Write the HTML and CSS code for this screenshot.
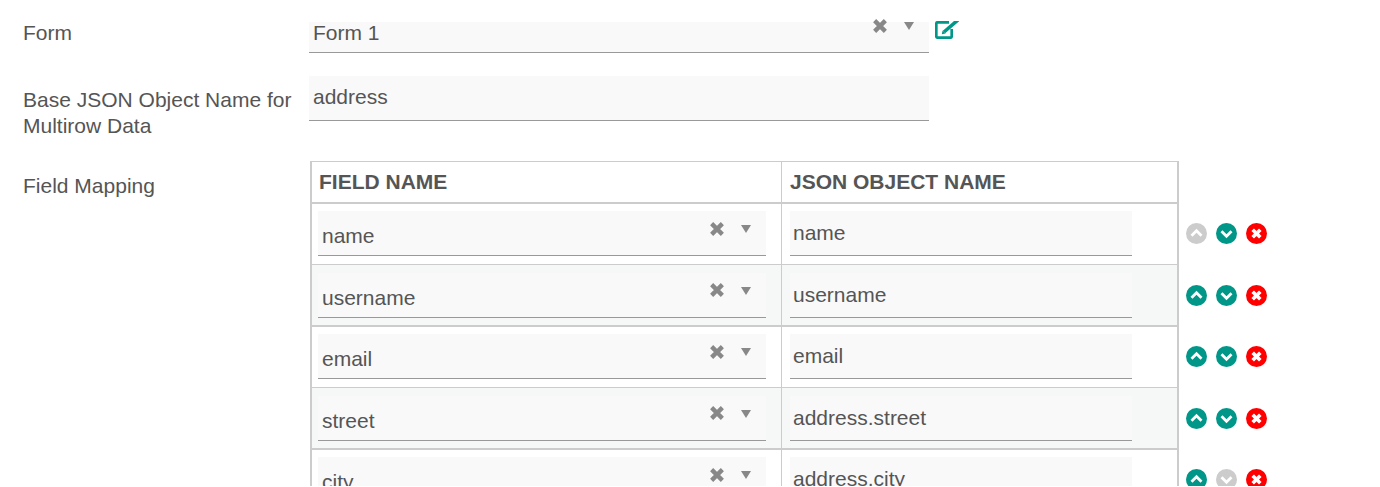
FILE: index.html
```html
<!DOCTYPE html>
<html lang="en">
<head>
<meta charset="utf-8">
<title>Field Mapping</title>
<link rel="stylesheet" href="styles.css">
</head>
<body>
<svg class="defs" width="0" height="0" aria-hidden="true">
  <symbol id="clear" viewBox="0 0 14 14"><path d="M2.300 2.300l9.400 9.400M11.700 2.300l-9.400 9.400" fill="none" stroke="currentColor" stroke-width="3.800"/></symbol>
  <symbol id="up" viewBox="0 0 21 21"><circle cx="10.500" cy="10.500" r="10.500" fill="currentColor"/><path d="M5.500 12.700l5-5 5 5" fill="none" stroke="#fff" stroke-width="2.800"/></symbol>
  <symbol id="down" viewBox="0 0 21 21"><circle cx="10.500" cy="10.500" r="10.500" fill="currentColor"/><path d="M5.500 8.300l5 5 5-5" fill="none" stroke="#fff" stroke-width="2.800"/></symbol>
  <symbol id="remove" viewBox="0 0 21 21"><circle cx="10.500" cy="10.500" r="10.500" fill="currentColor"/><path d="M6.700 6.700l7.600 7.600M14.300 6.700l-7.600 7.600" fill="none" stroke="#fff" stroke-width="3.600"/></symbol>
</svg>
<main class="form">
  <div class="form-row form-row-first">
    <div class="label">Form</div>
    <div class="field select select-form"><span class="value">Form 1</span><svg class="clear"><use href="#clear"/></svg><span class="caret"></span></div>
    <svg class="edit" viewBox="0 0 25 18" width="25" height="18"><path d="M14 1.300H2.600a1.300 1.300 0 0 0-1.300 1.300v12.800a1.300 1.300 0 0 0 1.300 1.300h12.800a1.300 1.300 0 0 0 1.300-1.300V8" fill="none" stroke="currentColor" stroke-width="2.700"/><path d="M6.800 13.200l.8-3.800 3 3z" fill="currentColor"/><path d="M9 11L23 -1" fill="none" stroke="currentColor" stroke-width="3.600"/></svg>
  </div>
  <div class="form-row form-row-base">
    <div class="label">Base JSON Object Name for Multirow Data</div>
    <div class="field input input-base"><span class="value">address</span></div>
  </div>
  <div class="form-row">
    <div class="label label-mapping">Field Mapping</div>
    <div class="mapping">
      <div class="row head">
        <div class="cells"><div class="cell cell-a">FIELD NAME</div><div class="cell cell-b">JSON OBJECT NAME</div></div>
      </div>
      <div class="row">
        <div class="cells">
          <div class="cell cell-a"><div class="field select"><span class="value">name</span><svg class="clear"><use href="#clear"/></svg><span class="caret"></span></div></div>
          <div class="cell cell-b"><div class="field input"><span class="value">name</span></div></div>
        </div>
        <div class="actions"><svg class="action off"><use href="#up"/></svg><svg class="action on"><use href="#down"/></svg><svg class="action del"><use href="#remove"/></svg></div>
      </div>
      <div class="row">
        <div class="cells">
          <div class="cell cell-a"><div class="field select"><span class="value">username</span><svg class="clear"><use href="#clear"/></svg><span class="caret"></span></div></div>
          <div class="cell cell-b"><div class="field input"><span class="value">username</span></div></div>
        </div>
        <div class="actions"><svg class="action on"><use href="#up"/></svg><svg class="action on"><use href="#down"/></svg><svg class="action del"><use href="#remove"/></svg></div>
      </div>
      <div class="row">
        <div class="cells">
          <div class="cell cell-a"><div class="field select"><span class="value">email</span><svg class="clear"><use href="#clear"/></svg><span class="caret"></span></div></div>
          <div class="cell cell-b"><div class="field input"><span class="value">email</span></div></div>
        </div>
        <div class="actions"><svg class="action on"><use href="#up"/></svg><svg class="action on"><use href="#down"/></svg><svg class="action del"><use href="#remove"/></svg></div>
      </div>
      <div class="row">
        <div class="cells">
          <div class="cell cell-a"><div class="field select"><span class="value">street</span><svg class="clear"><use href="#clear"/></svg><span class="caret"></span></div></div>
          <div class="cell cell-b"><div class="field input"><span class="value">address.street</span></div></div>
        </div>
        <div class="actions"><svg class="action on"><use href="#up"/></svg><svg class="action on"><use href="#down"/></svg><svg class="action del"><use href="#remove"/></svg></div>
      </div>
      <div class="row">
        <div class="cells">
          <div class="cell cell-a"><div class="field select"><span class="value">city</span><svg class="clear"><use href="#clear"/></svg><span class="caret"></span></div></div>
          <div class="cell cell-b"><div class="field input"><span class="value">address.city</span></div></div>
        </div>
        <div class="actions"><svg class="action on"><use href="#up"/></svg><svg class="action off"><use href="#down"/></svg><svg class="action del"><use href="#remove"/></svg></div>
      </div>
    </div>
  </div>
</main>
</body>
</html>
```

FILE: styles.css
```css
html, body {
  margin: 0;
  height: 486px;
  overflow: hidden;
  background: #fff;
}

body {
  font-family: "Liberation Sans", Arial, sans-serif;
  font-size: 21px;
  color: #555;
}

.defs {
  display: block;
  height: 0;
}

.form {
  padding: 22px 0 0 23px;
}

.form-row {
  display: flex;
  align-items: flex-start;
}

.form-row-first {
  height: 54px;
}

.form-row-base {
  height: 85px;
}

.label {
  width: 286px;
  flex: none;
  line-height: 26px;
}

.form-row-first .label {
  margin-top: -2px;
}

.form-row-base .label {
  margin-top: 11px;
}

.label-mapping {
  margin-top: 12px;
}

.field {
  position: relative;
  background: #f9f9f9;
  border-bottom: 1px solid #999;
  box-sizing: border-box;
  height: 45px;
}

.value {
  position: absolute;
  left: 3px;
  line-height: 24px;
  white-space: nowrap;
}

.select .value {
  left: 4px;
  top: 13px;
}

.input .value {
  top: 10px;
}

.select-form {
  width: 620px;
  height: 31px;
}

.select-form .value {
  top: -1px;
}

.input-base {
  width: 620px;
}

.input-base .value {
  left: 4px;
  top: 9px;
}

.clear {
  position: absolute;
  top: 10px;
  right: 41px;
  width: 16px;
  height: 16px;
  color: #888;
}

.row:nth-child(odd) .clear {
  top: 9px;
}

.select-form .clear {
  top: -4px;
}

.caret {
  position: absolute;
  top: 14px;
  right: 15px;
  border-top: 8px solid #888;
  border-left: 5px solid transparent;
  border-right: 5px solid transparent;
}

.select-form .caret {
  top: 0;
}

.edit {
  flex: none;
  margin: -1px 0 0 6px;
  color: #009688;
}

.mapping {
  margin-left: 1px;
}

.row {
  display: flex;
  height: 61px;
  box-sizing: border-box;
}

.cells {
  display: flex;
  width: 869px;
  flex: none;
  box-sizing: border-box;
  border-left: 2px solid #ccc;
  border-right: 2px solid #ccc;
  border-bottom: 1px solid #ccc;
}

.row:nth-child(odd) {
  height: 62px;
}

.row:nth-child(odd) .cells {
  background: #f5f8f7;
  border-bottom-width: 2px;
}

.row.head {
  height: 43px;
}

.row.head .cells {
  border-top: 1px solid #ccc;
  border-bottom-width: 2px;
  background: #fff;
}

.cell {
  box-sizing: border-box;
  padding: 7px 0 0 6px;
}

.row:nth-child(odd) .cell {
  padding-top: 8px;
}

.row.head .cell {
  font-weight: 700;
  line-height: 26px;
  padding: 7px 0 0 7px;
}

.cell-a {
  width: 470px;
  border-right: 1px solid #ccc;
  padding-right: 15px;
}

.cell-b {
  flex: 1;
  padding-left: 8px;
  padding-right: 45px;
}

.row.head .cell-b {
  padding-left: 8px;
}

.actions {
  display: flex;
  gap: 9px;
  padding: 19px 0 0 7px;
}

.row:nth-child(odd) .actions {
  padding-top: 20px;
}

.action {
  width: 21px;
  height: 21px;
}

.action.on {
  color: #009688;
}

.action.off {
  color: #ccc;
}

.action.del {
  color: #f00;
}
```
